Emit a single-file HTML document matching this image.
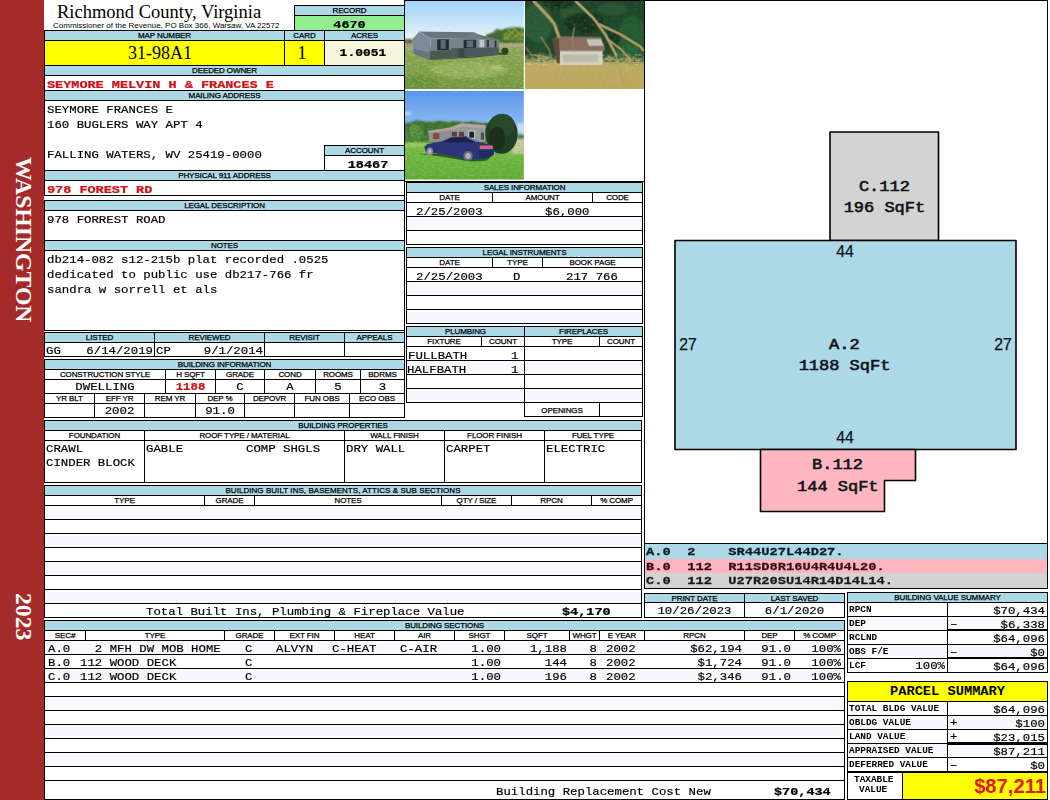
<!DOCTYPE html>
<html><head><meta charset="utf-8"><title>Property Record</title>
<style>
html,body{margin:0;padding:0;background:#fff;}
body{width:1050px;height:800px;position:relative;overflow:hidden;font-family:"Liberation Sans",sans-serif;}
.b{position:absolute;box-sizing:border-box;border:1px solid #000;overflow:hidden;white-space:pre;}
.l{font:8px/8px "Liberation Sans",sans-serif;text-align:center;color:#000;letter-spacing:-0.1px;padding-top:1px;-webkit-text-stroke-width:0.25px;}
.t{position:absolute;white-space:pre;color:#000;}
.m{font:12.35px/14px "Liberation Mono",monospace;-webkit-text-stroke-width:0.2px;}
.mb{font:bold 13.5px/14px "Liberation Mono",monospace;-webkit-text-stroke-width:0.3px;}
.r{color:#d01218;}
.s{display:inline-block;transform:scaleY(.88);transform-origin:50% 74%;}
.t.m,.t.mb,.t.sm{transform:scaleY(.88);transform-origin:0 74%;}
.m>.s,.t.m{transform:scaleY(.94);}
.mb>.s,.t.mb{transform:scaleY(.82);}
.sm{font:bold 9.4px/14px "Liberation Mono",monospace;}
svg{position:absolute;display:block;}
</style></head><body>
<div style="position:absolute;left:0;top:0;width:44px;height:800px;background:#a52a2a"></div>
<div class="t" style="left:0;top:0;width:44px;height:800px;color:#fff;font:bold 23.7px/44px 'Liberation Serif',serif;"><div style="position:absolute;left:45.5px;top:157px;transform-origin:0 0;transform:rotate(90deg);white-space:nowrap">WASHINGTON</div><div style="position:absolute;left:45.5px;top:593px;transform-origin:0 0;transform:rotate(90deg);white-space:nowrap">2023</div></div>
<div class="t " style="left:57px;top:1px;font:18.5px/22px 'Liberation Serif',serif;">Richmond County, Virginia</div>
<div class="t " style="left:53px;top:21px;font:8px/10px 'Liberation Sans',sans-serif;">Commissioner of the Revenue, PO Box 366, Warsaw, VA 22572</div>
<div class="b l" style="left:294px;top:5px;width:111px;height:11px;background:#add8e6;">RECORD</div>
<div class="b mb" style="left:294px;top:15px;width:111px;height:16px;background:#90ee90;text-align:center;line-height:18px;"><span class="s">4670</span></div>
<div class="b l" style="left:44px;top:30px;width:241px;height:11px;background:#add8e6;">MAP NUMBER</div>
<div class="b l" style="left:284px;top:30px;width:41px;height:11px;background:#add8e6;">CARD</div>
<div class="b l" style="left:324px;top:30px;width:81px;height:11px;background:#add8e6;">ACRES</div>
<div class="b " style="left:44px;top:40px;width:241px;height:26px;background:#ffff00;text-align:center;padding-right:9px;font:18px/25px 'Liberation Serif',serif;">31-98A1</div>
<div class="b " style="left:284px;top:40px;width:41px;height:26px;background:#ffff00;text-align:center;padding-right:5px;font:18px/25px 'Liberation Serif',serif;">1</div>
<div class="b mb" style="left:324px;top:40px;width:81px;height:26px;background:#f5f5dc;text-align:center;line-height:23px;font-size:13px;padding-right:3px;"><span class="s">1.0051</span></div>
<div class="b l" style="left:44px;top:65px;width:361px;height:11px;background:#add8e6;">DEEDED OWNER</div>
<div class="b mb r" style="left:44px;top:75px;width:361px;height:16px;background:#fff;padding-left:2px;line-height:17px;"><span class="s">SEYMORE MELVIN H &amp; FRANCES E</span></div>
<div class="b l" style="left:44px;top:90px;width:361px;height:11px;background:#add8e6;">MAILING ADDRESS</div>
<div class="b m" style="left:44px;top:100px;width:361px;height:71px;background:#fff;"></div>
<div class="t m" style="left:47px;top:103px;">SEYMORE FRANCES E</div>
<div class="t m" style="left:47px;top:118px;">160 BUGLERS WAY APT 4</div>
<div class="t m" style="left:47px;top:148px;">FALLING WATERS, WV 25419-0000</div>
<div class="b l" style="left:324px;top:145px;width:81px;height:11px;background:#add8e6;">ACCOUNT</div>
<div class="b mb" style="left:324px;top:155px;width:81px;height:16px;background:#fff;text-align:center;line-height:18px;padding-left:7px;"><span class="s">18467</span></div>
<div class="b l" style="left:44px;top:170px;width:361px;height:11px;background:#add8e6;">PHYSICAL 911 ADDRESS</div>
<div class="b mb r" style="left:44px;top:180px;width:361px;height:16px;background:#fff;padding-left:2px;line-height:18px;"><span class="s">978 FOREST RD</span></div>
<div class="b l" style="left:44px;top:200px;width:361px;height:11px;background:#add8e6;">LEGAL DESCRIPTION</div>
<div class="b m" style="left:44px;top:210px;width:361px;height:31px;background:#fff;padding-left:2px;line-height:18px;"><span class="s">978 FORREST ROAD</span></div>
<div class="b l" style="left:44px;top:240px;width:361px;height:11px;background:#add8e6;">NOTES</div>
<div class="b m" style="left:44px;top:250px;width:361px;height:81px;background:#fff;"></div>
<div class="t m" style="left:47px;top:253px;">db214-082 s12-215b plat recorded .0525</div>
<div class="t m" style="left:47px;top:268px;">dedicated to public use db217-766 fr</div>
<div class="t m" style="left:47px;top:283px;">sandra w sorrell et als</div>
<div class="b l" style="left:44px;top:332px;width:111px;height:11px;background:#add8e6;">LISTED</div>
<div class="b l" style="left:154px;top:332px;width:111px;height:11px;background:#add8e6;">REVIEWED</div>
<div class="b l" style="left:264px;top:332px;width:81px;height:11px;background:#add8e6;">REVISIT</div>
<div class="b l" style="left:344px;top:332px;width:61px;height:11px;background:#add8e6;">APPEALS</div>
<div class="b m" style="left:44px;top:342px;width:111px;height:15px;background:#fff;line-height:15px;"><span style="position:absolute;left:1px;top:0.5px;transform:scaleY(.94);transform-origin:0 74%">GG</span><span style="position:absolute;right:1px;top:0.5px;transform:scaleY(.94);transform-origin:0 74%">6/14/2019</span></div>
<div class="b m" style="left:154px;top:342px;width:111px;height:15px;background:#fff;line-height:15px;"><span style="position:absolute;left:1px;top:0.5px;transform:scaleY(.94);transform-origin:0 74%">CP</span><span style="position:absolute;right:1px;top:0.5px;transform:scaleY(.94);transform-origin:0 74%">9/1/2014</span></div>
<div class="b m" style="left:264px;top:342px;width:81px;height:15px;background:#fff;line-height:15px;"><span style="position:absolute;left:1px;top:0.5px;transform:scaleY(.94);transform-origin:0 74%"></span><span style="position:absolute;right:1px;top:0.5px;transform:scaleY(.94);transform-origin:0 74%"></span></div>
<div class="b m" style="left:344px;top:342px;width:61px;height:15px;background:#fff;line-height:15px;"><span style="position:absolute;left:1px;top:0.5px;transform:scaleY(.94);transform-origin:0 74%"></span><span style="position:absolute;right:1px;top:0.5px;transform:scaleY(.94);transform-origin:0 74%"></span></div>
<div class="b l" style="left:44px;top:359px;width:361px;height:11px;background:#add8e6;">BUILDING INFORMATION</div>
<div class="b l" style="left:44px;top:369px;width:122px;height:11px;background:#fff;">CONSTRUCTION STYLE</div>
<div class="b m" style="left:44px;top:379px;width:122px;height:15px;background:#fff;text-align:center;line-height:15px;"><span class="s">DWELLING</span></div>
<div class="b l" style="left:165px;top:369px;width:51px;height:11px;background:#fff;">H SQFT</div>
<div class="b m" style="left:165px;top:379px;width:51px;height:15px;background:#fff;text-align:center;line-height:15px;"><span class="s"><b class="r">1188</b></span></div>
<div class="b l" style="left:215px;top:369px;width:50px;height:11px;background:#fff;">GRADE</div>
<div class="b m" style="left:215px;top:379px;width:50px;height:15px;background:#fff;text-align:center;line-height:15px;"><span class="s">C</span></div>
<div class="b l" style="left:264px;top:369px;width:52px;height:11px;background:#fff;">COND</div>
<div class="b m" style="left:264px;top:379px;width:52px;height:15px;background:#fff;text-align:center;line-height:15px;"><span class="s">A</span></div>
<div class="b l" style="left:315px;top:369px;width:46px;height:11px;background:#fff;">ROOMS</div>
<div class="b m" style="left:315px;top:379px;width:46px;height:15px;background:#fff;text-align:center;line-height:15px;"><span class="s">5</span></div>
<div class="b l" style="left:360px;top:369px;width:45px;height:11px;background:#fff;">BDRMS</div>
<div class="b m" style="left:360px;top:379px;width:45px;height:15px;background:#fff;text-align:center;line-height:15px;"><span class="s">3</span></div>
<div class="b l" style="left:44px;top:393px;width:51px;height:11px;background:#fff;">YR BLT</div>
<div class="b m" style="left:44px;top:403px;width:51px;height:15px;background:#fff;text-align:center;line-height:15px;"></div>
<div class="b l" style="left:94px;top:393px;width:51px;height:11px;background:#fff;">EFF YR</div>
<div class="b m" style="left:94px;top:403px;width:51px;height:15px;background:#fff;text-align:center;line-height:15px;"><span class="s">2002</span></div>
<div class="b l" style="left:144px;top:393px;width:52px;height:11px;background:#fff;">REM YR</div>
<div class="b m" style="left:144px;top:403px;width:52px;height:15px;background:#fff;text-align:center;line-height:15px;"></div>
<div class="b l" style="left:195px;top:393px;width:50px;height:11px;background:#fff;">DEP %</div>
<div class="b m" style="left:195px;top:403px;width:50px;height:15px;background:#fff;text-align:center;line-height:15px;"><span class="s">91.0</span></div>
<div class="b l" style="left:244px;top:393px;width:51px;height:11px;background:#fff;">DEPOVR</div>
<div class="b m" style="left:244px;top:403px;width:51px;height:15px;background:#fff;text-align:center;line-height:15px;"></div>
<div class="b l" style="left:294px;top:393px;width:56px;height:11px;background:#fff;">FUN OBS</div>
<div class="b m" style="left:294px;top:403px;width:56px;height:15px;background:#fff;text-align:center;line-height:15px;"></div>
<div class="b l" style="left:349px;top:393px;width:56px;height:11px;background:#fff;">ECO OBS</div>
<div class="b m" style="left:349px;top:403px;width:56px;height:15px;background:#fff;text-align:center;line-height:15px;"></div>
<div class="b l" style="left:406px;top:182px;width:237px;height:11px;background:#add8e6;">SALES INFORMATION</div>
<div class="b l" style="left:406px;top:192px;width:87px;height:11px;background:#fff;">DATE</div>
<div class="b l" style="left:492px;top:192px;width:101px;height:11px;background:#fff;">AMOUNT</div>
<div class="b l" style="left:592px;top:192px;width:51px;height:11px;background:#fff;">CODE</div>
<div class="b " style="left:406px;top:202px;width:237px;height:15px;background:#fff;"></div>
<div class="b " style="left:406px;top:216px;width:237px;height:15px;background:#f8f8ff;"></div>
<div class="b " style="left:406px;top:230px;width:237px;height:15px;background:#fff;"></div>
<div class="t m" style="left:416px;top:205px;">2/25/2003</div>
<div class="t m" style="left:545px;top:205px;">$6,000</div>
<div class="b l" style="left:406px;top:247px;width:237px;height:11px;background:#add8e6;">LEGAL INSTRUMENTS</div>
<div class="b l" style="left:406px;top:257px;width:87px;height:11px;background:#fff;">DATE</div>
<div class="b l" style="left:492px;top:257px;width:51px;height:11px;background:#fff;">TYPE</div>
<div class="b l" style="left:542px;top:257px;width:101px;height:11px;background:#fff;">BOOK PAGE</div>
<div class="b " style="left:406px;top:267px;width:237px;height:15px;background:#fff;"></div>
<div class="b " style="left:406px;top:281px;width:237px;height:15px;background:#f8f8ff;"></div>
<div class="b " style="left:406px;top:295px;width:237px;height:15px;background:#fff;"></div>
<div class="b " style="left:406px;top:309px;width:237px;height:15px;background:#f8f8ff;"></div>
<div class="t m" style="left:416px;top:270px;">2/25/2003</div>
<div class="t m" style="left:513px;top:270px;">D</div>
<div class="t m" style="left:566px;top:270px;">217 766</div>
<div class="b l" style="left:406px;top:326px;width:119px;height:11px;background:#add8e6;">PLUMBING</div>
<div class="b l" style="left:524px;top:326px;width:119px;height:11px;background:#add8e6;">FIREPLACES</div>
<div class="b l" style="left:406px;top:336px;width:76px;height:11px;background:#fff;">FIXTURE</div>
<div class="b l" style="left:481px;top:336px;width:44px;height:11px;background:#fff;">COUNT</div>
<div class="b l" style="left:524px;top:336px;width:76px;height:11px;background:#fff;">TYPE</div>
<div class="b l" style="left:599px;top:336px;width:44px;height:11px;background:#fff;">COUNT</div>
<div class="b " style="left:406px;top:346px;width:119px;height:15px;background:#fff;"></div>
<div class="b " style="left:524px;top:346px;width:119px;height:15px;background:#fff;"></div>
<div class="b " style="left:406px;top:360px;width:119px;height:15px;background:#f8f8ff;"></div>
<div class="b " style="left:524px;top:360px;width:119px;height:15px;background:#f8f8ff;"></div>
<div class="b " style="left:406px;top:374px;width:119px;height:15px;background:#fff;"></div>
<div class="b " style="left:524px;top:374px;width:119px;height:15px;background:#fff;"></div>
<div class="b " style="left:406px;top:388px;width:119px;height:15px;background:#f8f8ff;"></div>
<div class="b " style="left:524px;top:388px;width:119px;height:15px;background:#f8f8ff;"></div>
<div class="t m" style="left:408px;top:349px;">FULLBATH</div>
<div class="t m" style="left:511px;top:349px;">1</div>
<div class="t m" style="left:407px;top:363px;">HALFBATH</div>
<div class="t m" style="left:511px;top:363px;">1</div>
<div class="b l" style="left:524px;top:402px;width:76px;height:15px;background:#fff;line-height:13px;">OPENINGS</div>
<div class="b " style="left:599px;top:402px;width:44px;height:15px;background:#fff;"></div>
<div class="b l" style="left:44px;top:420px;width:598px;height:11px;background:#add8e6;">BUILDING PROPERTIES</div>
<div class="b l" style="left:44px;top:430px;width:101px;height:11px;background:#fff;">FOUNDATION</div>
<div class="b " style="left:44px;top:440px;width:101px;height:43px;background:#fff;"></div>
<div class="b l" style="left:144px;top:430px;width:201px;height:11px;background:#fff;">ROOF TYPE / MATERIAL</div>
<div class="b " style="left:144px;top:440px;width:201px;height:43px;background:#fff;"></div>
<div class="b l" style="left:344px;top:430px;width:101px;height:11px;background:#fff;">WALL FINISH</div>
<div class="b " style="left:344px;top:440px;width:101px;height:43px;background:#fff;"></div>
<div class="b l" style="left:444px;top:430px;width:101px;height:11px;background:#fff;">FLOOR FINISH</div>
<div class="b " style="left:444px;top:440px;width:101px;height:43px;background:#fff;"></div>
<div class="b l" style="left:544px;top:430px;width:98px;height:11px;background:#fff;">FUEL TYPE</div>
<div class="b " style="left:544px;top:440px;width:98px;height:43px;background:#fff;"></div>
<div class="t m" style="left:46px;top:442px;">CRAWL</div>
<div class="t m" style="left:46px;top:456px;">CINDER BLOCK</div>
<div class="t m" style="left:146px;top:442px;">GABLE</div>
<div class="t m" style="left:246px;top:442px;">COMP SHGLS</div>
<div class="t m" style="left:346px;top:442px;">DRY WALL</div>
<div class="t m" style="left:446px;top:442px;">CARPET</div>
<div class="t m" style="left:546px;top:442px;">ELECTRIC</div>
<div class="b l" style="left:44px;top:485px;width:598px;height:11px;background:#add8e6;letter-spacing:0.05px;">BUILDING BUILT INS, BASEMENTS, ATTICS &amp; SUB SECTIONS</div>
<div class="b l" style="left:44px;top:495px;width:161px;height:11px;background:#fff;">TYPE</div>
<div class="b l" style="left:204px;top:495px;width:51px;height:11px;background:#fff;">GRADE</div>
<div class="b l" style="left:254px;top:495px;width:188px;height:11px;background:#fff;">NOTES</div>
<div class="b l" style="left:441px;top:495px;width:71px;height:11px;background:#fff;">QTY / SIZE</div>
<div class="b l" style="left:511px;top:495px;width:81px;height:11px;background:#fff;">RPCN</div>
<div class="b l" style="left:591px;top:495px;width:51px;height:11px;background:#fff;">% COMP</div>
<div class="b " style="left:44px;top:505px;width:598px;height:15px;background:#f8f8ff;"></div>
<div class="b " style="left:44px;top:519px;width:598px;height:15px;background:#fff;"></div>
<div class="b " style="left:44px;top:533px;width:598px;height:15px;background:#f8f8ff;"></div>
<div class="b " style="left:44px;top:547px;width:598px;height:15px;background:#fff;"></div>
<div class="b " style="left:44px;top:561px;width:598px;height:15px;background:#f8f8ff;"></div>
<div class="b " style="left:44px;top:575px;width:598px;height:15px;background:#fff;"></div>
<div class="b " style="left:44px;top:589px;width:598px;height:15px;background:#f8f8ff;"></div>
<div class="b " style="left:44px;top:603px;width:598px;height:15px;background:#fff;"></div>
<div class="t m" style="left:146px;top:605px;">Total Built Ins, Plumbing &amp; Fireplace Value</div>
<div class="t mb" style="left:562px;top:605px;">$4,170</div>
<div class="b l" style="left:644px;top:593px;width:101px;height:10px;background:#add8e6;">PRINT DATE</div>
<div class="b l" style="left:744px;top:593px;width:101px;height:10px;background:#add8e6;">LAST SAVED</div>
<div class="b m" style="left:644px;top:602px;width:101px;height:16px;background:#fff;text-align:center;line-height:16px;"><span class="s">10/26/2023</span></div>
<div class="b m" style="left:744px;top:602px;width:101px;height:16px;background:#fff;text-align:center;line-height:16px;"><span class="s">6/1/2020</span></div>
<div class="b l" style="left:44px;top:620px;width:801px;height:11px;background:#add8e6;">BUILDING SECTIONS</div>
<div class="b l" style="left:44px;top:630px;width:42px;height:11px;background:#fff;">SEC#</div>
<div class="b l" style="left:85px;top:630px;width:140px;height:11px;background:#fff;">TYPE</div>
<div class="b l" style="left:224px;top:630px;width:51px;height:11px;background:#fff;">GRADE</div>
<div class="b l" style="left:274px;top:630px;width:61px;height:11px;background:#fff;">EXT FIN</div>
<div class="b l" style="left:334px;top:630px;width:61px;height:11px;background:#fff;">HEAT</div>
<div class="b l" style="left:394px;top:630px;width:61px;height:11px;background:#fff;">AIR</div>
<div class="b l" style="left:454px;top:630px;width:51px;height:11px;background:#fff;">SHGT</div>
<div class="b l" style="left:504px;top:630px;width:66px;height:11px;background:#fff;">SQFT</div>
<div class="b l" style="left:569px;top:630px;width:31px;height:11px;background:#fff;">WHGT</div>
<div class="b l" style="left:599px;top:630px;width:46px;height:11px;background:#fff;">E YEAR</div>
<div class="b l" style="left:644px;top:630px;width:101px;height:11px;background:#fff;">RPCN</div>
<div class="b l" style="left:744px;top:630px;width:51px;height:11px;background:#fff;">DEP</div>
<div class="b l" style="left:794px;top:630px;width:51px;height:11px;background:#fff;">% COMP</div>
<div class="b " style="left:44px;top:640px;width:801px;height:15px;background:#f8f8ff;"></div>
<div class="b " style="left:44px;top:654px;width:801px;height:15px;background:#fff;"></div>
<div class="b " style="left:44px;top:668px;width:801px;height:15px;background:#f8f8ff;"></div>
<div class="b " style="left:44px;top:682px;width:801px;height:15px;background:#fff;"></div>
<div class="b " style="left:44px;top:696px;width:801px;height:15px;background:#f8f8ff;"></div>
<div class="b " style="left:44px;top:710px;width:801px;height:15px;background:#fff;"></div>
<div class="b " style="left:44px;top:724px;width:801px;height:15px;background:#f8f8ff;"></div>
<div class="b " style="left:44px;top:738px;width:801px;height:15px;background:#fff;"></div>
<div class="b " style="left:44px;top:752px;width:801px;height:15px;background:#f8f8ff;"></div>
<div class="b " style="left:44px;top:766px;width:801px;height:15px;background:#fff;"></div>
<div class="b " style="left:44px;top:780px;width:801px;height:20px;background:#fff;"></div>
<div class="t m" style="left:48px;top:641.5px;">A.0</div>
<div class="t m" style="left:80px;top:641.5px;">  2 MFH DW MOB HOME</div>
<div class="t m" style="left:245px;top:641.5px;">C</div>
<div class="t m" style="left:276px;top:641.5px;">ALVYN</div>
<div class="t m" style="left:332px;top:641.5px;">C-HEAT</div>
<div class="t m" style="left:400px;top:641.5px;">C-AIR</div>
<div class="t m" style="left:401px;width:100px;text-align:right;top:641.5px">1.00</div>
<div class="t m" style="left:467px;width:100px;text-align:right;top:641.5px">1,188</div>
<div class="t m" style="left:497px;width:100px;text-align:right;top:641.5px">8</div>
<div class="t m" style="left:606px;top:641.5px;">2002</div>
<div class="t m" style="left:642px;width:100px;text-align:right;top:641.5px">$62,194</div>
<div class="t m" style="left:691px;width:100px;text-align:right;top:641.5px">91.0</div>
<div class="t m" style="left:741px;width:100px;text-align:right;top:641.5px">100%</div>
<div class="t m" style="left:48px;top:655.5px;">B.0</div>
<div class="t m" style="left:80px;top:655.5px;">112 WOOD DECK</div>
<div class="t m" style="left:245px;top:655.5px;">C</div>
<div class="t m" style="left:276px;top:655.5px;"></div>
<div class="t m" style="left:332px;top:655.5px;"></div>
<div class="t m" style="left:400px;top:655.5px;"></div>
<div class="t m" style="left:401px;width:100px;text-align:right;top:655.5px">1.00</div>
<div class="t m" style="left:467px;width:100px;text-align:right;top:655.5px">144</div>
<div class="t m" style="left:497px;width:100px;text-align:right;top:655.5px">8</div>
<div class="t m" style="left:606px;top:655.5px;">2002</div>
<div class="t m" style="left:642px;width:100px;text-align:right;top:655.5px">$1,724</div>
<div class="t m" style="left:691px;width:100px;text-align:right;top:655.5px">91.0</div>
<div class="t m" style="left:741px;width:100px;text-align:right;top:655.5px">100%</div>
<div class="t m" style="left:48px;top:669.5px;">C.0</div>
<div class="t m" style="left:80px;top:669.5px;">112 WOOD DECK</div>
<div class="t m" style="left:245px;top:669.5px;">C</div>
<div class="t m" style="left:276px;top:669.5px;"></div>
<div class="t m" style="left:332px;top:669.5px;"></div>
<div class="t m" style="left:400px;top:669.5px;"></div>
<div class="t m" style="left:401px;width:100px;text-align:right;top:669.5px">1.00</div>
<div class="t m" style="left:467px;width:100px;text-align:right;top:669.5px">196</div>
<div class="t m" style="left:497px;width:100px;text-align:right;top:669.5px">8</div>
<div class="t m" style="left:606px;top:669.5px;">2002</div>
<div class="t m" style="left:642px;width:100px;text-align:right;top:669.5px">$2,346</div>
<div class="t m" style="left:691px;width:100px;text-align:right;top:669.5px">91.0</div>
<div class="t m" style="left:741px;width:100px;text-align:right;top:669.5px">100%</div>
<div class="t m" style="left:496px;top:785px;">Building Replacement Cost New</div>
<div class="t mb" style="left:774px;top:785px;">$70,434</div>
<div class="b " style="left:644px;top:0px;width:404px;height:589px;background:#fff;"></div>
<svg style="left:645px;top:2px" width="402" height="541" viewBox="645 2 402 541"><g stroke="#000" stroke-width="1.6" stroke-linejoin="round"><rect x="830" y="132" width="108.5" height="108.5" fill="#d3d3d3"/><rect x="675" y="240.5" width="341" height="209" fill="#add8e6"/><path d="M760.5 449.5 H915.5 V480.5 H884.5 V511.5 H760.5 Z" fill="#ffb6c1"/></g><g font-family="'Liberation Mono',monospace" font-weight="normal" stroke="#101418" stroke-width="0.7" font-size="17" text-anchor="middle" fill="#101418"><text transform="translate(884.4,190.6) scale(1,.81)">C.112</text><text transform="translate(884.4,211.9) scale(1,.81)">196 SqFt</text><text transform="translate(844.3,348.8) scale(1,.81)">A.2</text><text transform="translate(844.5,370.3) scale(1,.81)">1188 SqFt</text><text transform="translate(837.5,469.1) scale(1,.81)">B.112</text><text transform="translate(837.8,491.4) scale(1,.81)">144 SqFt</text></g><g font-family="'Liberation Sans',sans-serif" font-size="15.7" text-anchor="middle" fill="#0c1218" stroke="#0c1218" stroke-width="0.25"><text x="845" y="257">44</text><text x="845" y="443.4">44</text><text x="688" y="350">27</text><text x="1003" y="350">27</text></g></svg>
<div style="position:absolute;left:645px;top:544px;width:402px;height:14.5px;background:#add8e6"></div>
<div class="t mb" style="left:646px;top:544px;font-size:13.72px;line-height:15px;transform:scaleY(.86);color:#0a1a2a">A.0  2    SR44U27L44D27.</div>
<div style="position:absolute;left:645px;top:558.5px;width:402px;height:14.5px;background:#ffb6c1"></div>
<div class="t mb" style="left:646px;top:558.5px;font-size:13.72px;line-height:15px;transform:scaleY(.86);color:#3a0c16">B.0  112  R11SD8R16U4R4U4L20.</div>
<div style="position:absolute;left:645px;top:573px;width:402px;height:15px;background:#d3d3d3"></div>
<div class="t mb" style="left:646px;top:573px;font-size:13.72px;line-height:15px;transform:scaleY(.86);color:#1a1a1a">C.0  112  U27R20SU14R14D14L14.</div>
<div style="position:absolute;left:644px;top:543px;width:404px;height:1px;background:#000"></div>
<div class="b l" style="left:847px;top:592px;width:201px;height:11px;background:#add8e6;">BUILDING VALUE SUMMARY</div>
<div class="b sm" style="left:847px;top:602px;width:101px;height:15px;background:#fff;padding-left:1px;"><span class="s">RPCN</span></div>
<div class="b m" style="left:947px;top:602px;width:101px;height:15px;background:#fff;text-align:right;padding-right:2px;line-height:16px;"><span class="s">$70,434</span></div>
<div class="b sm" style="left:847px;top:616px;width:101px;height:15px;background:#f8f8ff;padding-left:1px;"><span class="s">DEP</span></div>
<div class="b m" style="left:947px;top:616px;width:101px;height:15px;background:#f8f8ff;text-align:right;padding-right:2px;line-height:16px;"><span class="s">$6,338</span></div>
<div class="t m" style="left:950px;top:617px;">&#8211;</div>
<div style="position:absolute;left:947px;top:629px;width:101px;height:3px;background:#000"></div>
<div class="b sm" style="left:847px;top:630px;width:101px;height:15px;background:#fff;padding-left:1px;"><span class="s">RCLND</span></div>
<div class="b m" style="left:947px;top:630px;width:101px;height:15px;background:#fff;text-align:right;padding-right:2px;line-height:16px;"><span class="s">$64,096</span></div>
<div class="b sm" style="left:847px;top:644px;width:101px;height:15px;background:#f8f8ff;padding-left:1px;"><span class="s">OBS F/E</span></div>
<div class="b m" style="left:947px;top:644px;width:101px;height:15px;background:#f8f8ff;text-align:right;padding-right:2px;line-height:16px;"><span class="s">$0</span></div>
<div class="t m" style="left:950px;top:645px;">&#8211;</div>
<div style="position:absolute;left:947px;top:657px;width:101px;height:3px;background:#000"></div>
<div class="b sm" style="left:847px;top:658px;width:101px;height:15px;background:#fff;padding-left:1px;"><span class="s">LCF</span></div>
<div class="b m" style="left:947px;top:658px;width:101px;height:15px;background:#fff;text-align:right;padding-right:2px;line-height:16px;"><span class="s">$64,096</span></div>
<div class="t m" style="left:847px;width:98px;text-align:right;top:659px">100%</div>
<div class="b " style="left:847px;top:681px;width:201px;height:21px;background:#ffff00;text-align:center;font:bold 13.7px/20px 'Liberation Mono',monospace;">PARCEL SUMMARY</div>
<div class="b sm" style="left:847px;top:701px;width:101px;height:15px;background:#fff;padding-left:1px;"><span class="s">TOTAL BLDG VALUE</span></div>
<div class="b m" style="left:947px;top:701px;width:101px;height:15px;background:#fff;text-align:right;padding-right:2px;line-height:16px;"><span class="s">$64,096</span></div>
<div class="b sm" style="left:847px;top:715px;width:101px;height:15px;background:#f8f8ff;padding-left:1px;"><span class="s">OBLDG VALUE</span></div>
<div class="b m" style="left:947px;top:715px;width:101px;height:15px;background:#f8f8ff;text-align:right;padding-right:2px;line-height:16px;"><span class="s">$100</span></div>
<div class="t m" style="left:950px;top:716px;">+</div>
<div class="b sm" style="left:847px;top:729px;width:101px;height:15px;background:#fff;padding-left:1px;"><span class="s">LAND VALUE</span></div>
<div class="b m" style="left:947px;top:729px;width:101px;height:15px;background:#fff;text-align:right;padding-right:2px;line-height:16px;"><span class="s">$23,015</span></div>
<div class="t m" style="left:950px;top:730px;">+</div>
<div class="b sm" style="left:847px;top:743px;width:101px;height:15px;background:#f8f8ff;padding-left:1px;"><span class="s">APPRAISED VALUE</span></div>
<div class="b m" style="left:947px;top:743px;width:101px;height:15px;background:#f8f8ff;text-align:right;padding-right:2px;line-height:16px;"><span class="s">$87,211</span></div>
<div class="b sm" style="left:847px;top:757px;width:101px;height:15px;background:#fff;padding-left:1px;"><span class="s">DEFERRED VALUE</span></div>
<div class="b m" style="left:947px;top:757px;width:101px;height:15px;background:#fff;text-align:right;padding-right:2px;line-height:16px;"><span class="s">$0</span></div>
<div class="t m" style="left:950px;top:758px;">&#8211;</div>
<div style="position:absolute;left:947px;top:742px;width:101px;height:3px;background:#000"></div>
<div class="b sm" style="left:847px;top:772px;width:201px;height:28px;background:#fff;"></div>
<div class="t sm" style="left:854px;top:773px;">TAXABLE</div>
<div class="t sm" style="left:859px;top:783px;">VALUE</div>
<div class="b " style="left:902px;top:772px;width:146px;height:28px;background:#ffff00;text-align:right;padding-right:1px;color:#e8141e;font:bold 20.2px/26px 'Liberation Sans',sans-serif;">$87,211</div>
<svg width="0" height="0" style="left:0;top:0"><defs><filter id="bl" x="-5%" y="-5%" width="110%" height="110%"><feGaussianBlur stdDeviation="5"/></filter><filter id="bl2" x="-5%" y="-5%" width="110%" height="110%"><feGaussianBlur stdDeviation="9"/></filter><linearGradient id="sky1" x1="0" y1="0" x2="0" y2="1"><stop offset="0" stop-color="#a0d3fb"/><stop offset="0.42" stop-color="#c4e3fa"/><stop offset="0.72" stop-color="#e4f1f8"/><stop offset="1" stop-color="#eef5f7"/></linearGradient><linearGradient id="gr1" x1="0" y1="0" x2="0" y2="1"><stop offset="0" stop-color="#8aa653"/><stop offset="0.5" stop-color="#80a048"/><stop offset="1" stop-color="#6e943c"/></linearGradient><linearGradient id="sky3" x1="0" y1="0" x2="0" y2="1"><stop offset="0" stop-color="#5b97ea"/><stop offset="1" stop-color="#a9cdf6"/></linearGradient><linearGradient id="gr3" x1="0" y1="0" x2="0" y2="1"><stop offset="0" stop-color="#78c044"/><stop offset="1" stop-color="#5cab34"/></linearGradient><linearGradient id="dg2" x1="0" y1="0" x2="0" y2="1"><stop offset="0" stop-color="#c4b06c"/><stop offset="1" stop-color="#b8a45c"/></linearGradient><filter id="nzd" x="0" y="0" width="100%" height="100%"><feTurbulence type="fractalNoise" baseFrequency="0.035" numOctaves="3" seed="4"/><feColorMatrix type="matrix" values="0 0 0 0 0.02  0 0 0 0 0.08  0 0 0 0 0.03  0 0 0 2.2 -0.85"/></filter><filter id="nzl" x="0" y="0" width="100%" height="100%"><feTurbulence type="fractalNoise" baseFrequency="0.03 0.06" numOctaves="3" seed="9"/><feColorMatrix type="matrix" values="0 0 0 0 0.85  0 0 0 0 0.82  0 0 0 0 0.5  0 0 0 1.8 -0.75"/></filter><filter id="nzg" x="0" y="0" width="100%" height="100%"><feTurbulence type="fractalNoise" baseFrequency="0.03 0.07" numOctaves="3" seed="2"/><feColorMatrix type="matrix" values="0 0 0 0 0.15  0 0 0 0 0.3  0 0 0 0 0.08  0 0 0 1.6 -0.7"/></filter></defs></svg>
<svg style="left:405px;top:1px" width="118.8" height="88.4" viewBox="12 10 1018 760" preserveAspectRatio="none"><rect x="12" y="10" width="1018" height="420" fill="url(#sky1)"/><rect x="12" y="400" width="1018" height="370" fill="url(#gr1)"/><g filter="url(#bl2)"><rect x="0" y="338" width="85" height="40" fill="#5a6046"/><rect x="0" y="376" width="90" height="62" fill="#a2a670"/><path d="M705 372 L708 300 L760 285 L800 250 L840 262 L880 245 L960 235 L1035 245 L1035 372 Z" fill="#446e30"/><path d="M850 350 L860 280 L900 255 L980 250 L1035 270 L1035 350 Z" fill="#7e9a3a"/><rect x="815" y="374" width="220" height="36" fill="#a8a472"/><ellipse cx="560" cy="600" rx="330" ry="70" fill="#93b05c"/><ellipse cx="130" cy="720" rx="160" ry="70" fill="#668f38"/><ellipse cx="800" cy="585" rx="55" ry="11" fill="#c8c892"/><ellipse cx="670" cy="608" rx="25" ry="9" fill="#c0c088"/></g><clipPath id="c1"><path d="M705 372 L708 300 L760 285 L800 250 L840 262 L880 245 L960 235 L1035 245 L1035 372 Z"/></clipPath><g clip-path="url(#c1)"><rect x="700" y="230" width="335" height="145" filter="url(#nzd)" opacity="0.65"/></g><rect x="12" y="415" width="1018" height="355" filter="url(#nzl)" opacity="0.38"/><rect x="12" y="415" width="1018" height="355" filter="url(#nzg)" opacity="0.5"/><g filter="url(#bl)"><path d="M85 462 L225 518 L600 495 L820 472 L900 470 L820 455 L230 480 Z" fill="#33482a"/><path d="M80 332 L130 276 L232 330 L226 516 L85 462 Z" fill="#7b8a9a"/><path d="M88 420 L228 455 L226 516 L85 462 Z" fill="#67757f"/><path d="M232 330 L822 340 L816 470 L226 516 Z" fill="#76838a"/><path d="M128 273 L600 279 L652 300 L828 342 L232 331 Z" fill="#69747b"/><path d="M520 332 L600 279 L680 336 Z" fill="#737f88"/><path d="M228 440 L410 432 L410 500 L226 516 Z" fill="#4b584e"/><rect x="288" y="340" width="100" height="92" fill="#242a32"/><rect x="318" y="346" width="42" height="76" fill="#5d6876"/><rect x="514" y="344" width="108" height="70" fill="#272d35"/><rect x="540" y="350" width="56" height="58" fill="#626d7a"/><rect x="650" y="345" width="40" height="66" fill="#bcc6cc"/><rect x="713" y="345" width="18" height="62" fill="#2a3036"/><rect x="780" y="350" width="16" height="60" fill="#2a3036"/><path d="M408 416 L816 408 L816 472 L408 500 Z" fill="#4e595a"/><path d="M470 420 L520 419 L520 490 L470 494 Z" fill="#3d4748"/><ellipse cx="868" cy="442" rx="30" ry="30" fill="#2c4422"/></g></svg>
<svg style="left:525px;top:1px" width="119" height="88.4" viewBox="12 10 1018 760" preserveAspectRatio="none"><rect x="12" y="10" width="1018" height="760" fill="#1f4429"/><g filter="url(#bl2)"><ellipse cx="120" cy="200" rx="130" ry="170" fill="#2f5e38"/><ellipse cx="420" cy="110" rx="110" ry="60" fill="#2d5a36"/><ellipse cx="520" cy="200" rx="170" ry="90" fill="#172f1d"/><ellipse cx="300" cy="40" rx="140" ry="40" fill="#16301c"/><ellipse cx="760" cy="80" rx="130" ry="50" fill="#2c5a36"/><ellipse cx="930" cy="300" rx="120" ry="160" fill="#275e33"/><ellipse cx="900" cy="440" rx="120" ry="60" fill="#2a6c37"/><ellipse cx="760" cy="330" rx="70" ry="60" fill="#16301c"/><ellipse cx="130" cy="430" rx="100" ry="60" fill="#244e2c"/><rect x="0" y="505" width="1040" height="280" fill="url(#dg2)"/><path d="M0 540 L0 470 L60 500 L150 460 L250 510 L300 540 L680 540 L720 470 L800 510 L900 490 L1040 520 L1040 560 Z" fill="#a09a5c"/></g><rect x="12" y="10" width="1018" height="520" filter="url(#nzd)"/><rect x="12" y="470" width="1018" height="300" filter="url(#nzl)" opacity="0.55"/><rect x="12" y="470" width="1018" height="300" filter="url(#nzg)" opacity="0.3"/><g filter="url(#bl)"><path d="M243 345 L300 314 L662 320 L692 395 L692 442 L300 442 Z" fill="#8c705e"/><path d="M535 338 L660 338 L684 395 L560 395 Z" fill="#c2c2c0"/><path d="M243 345 L300 330 L312 545 L285 545 Z" fill="#5c4a3c"/><rect x="310" y="440" width="366" height="122" fill="#d2d2c4"/><rect x="335" y="470" width="300" height="62" fill="#bcbcaa"/><rect x="12" y="565" width="1018" height="210" fill="#bca860" opacity="0.75"/></g><g filter="url(#bl)" stroke="#b09c68" stroke-linecap="round" stroke-linejoin="round" fill="none"><path d="M90 15 L200 130 L262 205 L300 312" stroke-width="28"/><path d="M450 15 L600 160 L700 300 L790 470" stroke-width="24"/><path d="M790 470 L850 700" stroke-width="18" opacity="0.6"/><path d="M650 212 L820 292 L1000 402 L1030 440" stroke-width="22"/><path d="M720 340 L830 422 L920 520" stroke-width="17"/><path d="M150 322 L220 432 L242 505" stroke-width="14" stroke="#8a7e56"/><path d="M432 240 L420 322" stroke-width="9" stroke="#98a070"/><path d="M20 410 L72 482" stroke-width="10" stroke="#8a7e56"/><path d="M410 330 L430 440" stroke-width="12" stroke="#a08a66" opacity="0.7"/></g></svg>
<svg style="left:405px;top:91px" width="118.8" height="88.5" viewBox="12 28 1006 750" preserveAspectRatio="none"><rect x="12" y="28" width="1006" height="450" fill="url(#sky3)"/><rect x="12" y="455" width="1006" height="323" fill="url(#gr3)"/><g filter="url(#bl2)"><ellipse cx="30" cy="218" rx="40" ry="10" fill="#d4e4f8"/><rect x="960" y="300" width="70" height="120" fill="#c4dcf4"/><path d="M0 470 L0 300 L60 290 L110 275 L170 285 L230 290 L300 280 L380 290 L450 282 L520 295 L580 285 L650 300 L720 300 L720 470 Z" fill="#467c34"/><path d="M20 440 L30 330 L90 305 L150 330 L180 440 Z" fill="#5e9644"/><path d="M960 480 L965 385 L1030 400 L1030 480 Z" fill="#4e7e3a"/><path d="M905 560 L935 440 L1030 430 L1030 560 Z" fill="#c6caa0"/><path d="M12 462 L210 455 L200 500 L12 505 Z" fill="#98cc5c"/></g><g clip-path="url(#c3)"><rect x="0" y="270" width="720" height="200" filter="url(#nzd)" opacity="0.6"/></g><clipPath id="c3"><path d="M0 470 L0 300 L60 290 L110 275 L170 285 L230 290 L300 280 L380 290 L450 282 L520 295 L580 285 L650 300 L720 300 L720 470 Z"/></clipPath><rect x="12" y="470" width="1006" height="308" filter="url(#nzg)" opacity="0.5"/><rect x="12" y="470" width="1006" height="308" filter="url(#nzl)" opacity="0.25"/><g filter="url(#bl)"><path d="M212 372 L400 345 L400 455 L215 460 Z" fill="#8f9292"/><path d="M400 345 L492 308 L692 322 L692 460 L400 455 Z" fill="#999b9b"/><path d="M205 366 L400 336 L490 302 L696 318 L692 345 L492 328 L400 358 L210 382 Z" fill="#b0a89c"/><rect x="248" y="385" width="55" height="50" fill="#8a4a40"/><rect x="408" y="374" width="44" height="40" fill="#6a3a3a"/><rect x="468" y="374" width="44" height="40" fill="#6a3a3a"/><rect x="548" y="364" width="58" height="66" fill="#d8d8d8"/><rect x="556" y="372" width="42" height="52" fill="#1c2026"/><rect x="655" y="380" width="25" height="60" fill="#4a4e54"/><path d="M120 560 L330 585 L560 625 L700 620 L760 570 L600 560 Z" fill="#2c5a22"/><ellipse cx="830" cy="392" rx="136" ry="168" fill="#213d25"/><ellipse cx="835" cy="320" rx="105" ry="100" fill="#284a2c"/><ellipse cx="790" cy="430" rx="70" ry="100" fill="#1a2f1e"/><path d="M175 502 L198 480 L320 455 L400 420 L530 412 L640 460 L750 485 L766 562 L700 597 L560 612 L400 572 L190 547 Z" fill="#29357a"/><path d="M335 462 L405 426 L528 418 L612 462 Z" fill="#1b2244"/><path d="M548 416 L640 460 L612 462 L532 420 Z" fill="#6a78b8"/><rect x="645" y="490" width="110" height="30" fill="#cc6a7c"/><path d="M640 530 L765 530 L766 562 L700 597 L640 600 Z" fill="#222c66"/><ellipse cx="222" cy="540" rx="27" ry="34" fill="#8c8c98"/><ellipse cx="222" cy="540" rx="13" ry="18" fill="#b8b8c4"/><ellipse cx="546" cy="578" rx="40" ry="42" fill="#6c6c7c"/><ellipse cx="546" cy="578" rx="23" ry="25" fill="#b0b0bc"/></g></svg>
<div class="b" style="left:404px;top:0;width:241px;height:182px;background:none"></div>
<div style="position:absolute;left:404px;top:0;width:1px;height:418px;background:#000"></div>
<div style="position:absolute;left:644px;top:0;width:1px;height:589px;background:#000"></div>
</body></html>
